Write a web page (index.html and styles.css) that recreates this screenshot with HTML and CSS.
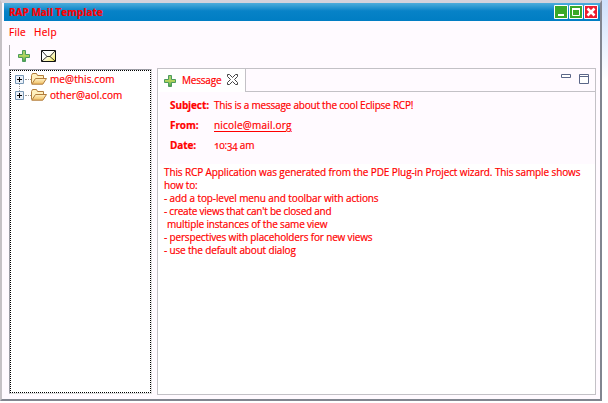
FILE: index.html
```html
<!DOCTYPE html>
<html lang="en">
<head>
<meta charset="utf-8">
<title>RAP Mail Template</title>
<link rel="stylesheet" href="styles.css">
</head>
<body>
<svg width="0" height="0" class="defs" aria-hidden="true">
  <defs>
    <linearGradient id="green" x2="0" y2="1"><stop stop-color="#9ccb6c"/><stop offset=".5" stop-color="#b5d65c"/><stop offset="1" stop-color="#3f9b50"/></linearGradient>
    <linearGradient id="gold" x2="0" y2="1"><stop stop-color="#fff4c8"/><stop offset="1" stop-color="#f0bd60"/></linearGradient>
    <linearGradient id="paper" x2="1" y2="1"><stop offset=".4" stop-color="#fff"/><stop offset="1" stop-color="#f4e84c"/></linearGradient>
    <symbol id="plus" viewBox="0 0 12 12"><path d="M4.5.5h3v4h4v3h-4v4h-3v-4h-4v-3h4z" fill="url(#green)" stroke="#4c9c5c"/></symbol>
    <symbol id="folder" viewBox="0 0 16 12"><path d="M.5 10.5v-8l1-2h4l1 2h6v3" fill="#fff0bd" stroke="#b17c3c"/><path d="M.8 11.2 4.5 5.5h11l-3.7 5.7z" fill="url(#gold)" stroke="#b17c3c"/></symbol>
    <symbol id="expand" viewBox="0 0 9 9"><path d="M.5.5h8v8h-8z" fill="#e9f0f8" stroke="#7898b5"/><path d="M2 4.5h5M4.5 2v5" stroke="#000"/></symbol>
  </defs>
</svg>
<div class="window">
  <header class="titlebar">
    <h1>RAP Mail Template</h1>
    <div class="controls">
      <svg class="control" viewBox="0 0 14 14"><path d="M.5.5h13v13H.5z" fill="#39a829" stroke="#fff"/><path d="M4 10h6" stroke="#fff" stroke-width="2"/></svg>
      <svg class="control" viewBox="0 0 14 14"><path d="M.5.5h13v13H.5z" fill="#39a829" stroke="#fff"/><path d="M3.5 4v6.5h7V4" fill="none" stroke="#fff"/><path d="M3 4h8" stroke="#fff" stroke-width="2"/></svg>
      <svg class="control" viewBox="0 0 14 14"><path d="M.5.5h13v13H.5z" fill="#ed1c2e" stroke="#fff"/><path d="m3.5 3.5 7 7m0-7-7 7" stroke="#fff" stroke-width="2.5"/></svg>
    </div>
  </header>
  <nav class="menu"><span>File</span><span>Help</span></nav>
  <div class="toolbar">
    <svg class="plus"><use href="#plus"/></svg>
    <svg class="mail" viewBox="0 0 15 12"><path d="M.5.5h14v11H.5z" fill="url(#paper)" stroke="#111"/><path d="m1 1 5 5.5h3L14 1M1 11l5-4.5M14 11 9 6.5" fill="none" stroke="#222" stroke-width=".9"/></svg>
  </div>
  <main class="workspace">
    <div class="tree">
      <div class="node"><svg class="expand"><use href="#expand"/></svg><i></i><svg class="folder"><use href="#folder"/></svg><span>me@this.com</span></div>
      <div class="link"></div>
      <div class="node"><svg class="expand"><use href="#expand"/></svg><i></i><svg class="folder"><use href="#folder"/></svg><span>other@aol.com</span></div>
    </div>
    <section class="view">
      <div class="tabs">
        <div class="tab"><svg class="plus"><use href="#plus"/></svg><span>Message</span>
          <svg class="close" viewBox="0 0 11 11"><path d="M.5.5h2l3 3 3-3h2v2l-3 3 3 3v2h-2l-3-3-3 3h-2v-2l3-3-3-3z" fill="#fff" stroke="#444"/></svg></div>
        <div class="rest">
          <svg class="min" viewBox="0 0 10 4"><path d="M.5.5h9v3h-9z" fill="#fff" stroke="#5b6688"/></svg>
          <svg class="max" viewBox="0 0 10 10"><path d="M.5.5h9v9h-9zM0 2.5h10" fill="#fff" stroke="#5b6688"/></svg>
        </div>
      </div>
      <div class="headers">
        <b>Subject:</b><span class="subject">This is a message about the cool Eclipse RCP!</span>
        <b>From:</b><span class="sender"><a>nicole@mail.org</a></span>
        <b>Date:</b><span class="date">10:34 am</span>
      </div>
      <div class="body">
        <div class="intro">This RCP Application was generated from the PDE Plug-in Project wizard. This sample shows</div>
        <div>how to:</div>
        <div class="intro">- add a top-level menu and toolbar with actions</div>
        <div class="tight">- create views that can't be closed and</div>
        <div class="indent">multiple instances of the same view</div>
        <div>- perspectives with placeholders for new views</div>
        <div>- use the default about dialog</div>
      </div>
    </section>
  </main>
</div>
</body>
</html>
```
FILE: styles.css
```css
* { box-sizing: border-box; }
body {
  margin: 0; width: 608px; height: 403px; overflow: hidden;
  background: linear-gradient(#cfe0fb, #fff 80px);
  font: 10px/13px "Open Sans", sans-serif; color: #f00; white-space: nowrap;
  -webkit-text-stroke: .2px #f00;
}
svg { display: block; flex: none; }
.defs { position: absolute; }
.window {
  display: flex; flex-direction: column;
  width: 602px; height: 401px; background: #fffaff;
  border: solid; border-width: 3px 2px 2px;
  border-color: #d5d3dc #81858f #81858f #c5c1c5;
  padding: 0 0 0 2px;
}
.titlebar {
  display: flex; justify-content: space-between; height: 18px;
  background: linear-gradient(#4eaddb, #0782c7 8px, #007dc3);
  padding: 2px 2px 0 5px;
}
h1 { margin: 0; font: bold 10px/15px "Open Sans", sans-serif; }
.controls { display: flex; gap: 1px; }
.control { width: 14px; height: 14px; }
.menu { display: flex; gap: 8px; height: 24px; padding: 5px 0 0 5px; letter-spacing: .3px; }
.toolbar {
  display: flex; align-items: center; gap: 11px;
  height: 21px; margin-left: 5px; padding-left: 8px; border-left: 1px solid #aaa6ac;
}
.plus { width: 12px; height: 12px; }
.mail { width: 15px; height: 12px; }
.workspace { display: flex; gap: 5px; flex: 1; padding: 2px 4px 4px 5px; min-height: 0; }
.tree {
  flex: none; width: 143px; margin: 1px 0; padding: 1px 5px; background: #fff;
  border: 1px solid #9b9ba3; border-right-color: #ddd; border-bottom-color: #ddd;
  outline: 1px dotted #000; outline-offset: -2px; letter-spacing: .1px;
}
.node { display: flex; align-items: center; height: 16px; }
.link { height: 7px; margin: -3px 0 -4px 4px; border-left: 1px dotted #999; }
.expand { width: 9px; height: 9px; }
.node i { width: 6px; border-top: 1px dotted #999; margin-left: 1px; }
.folder { width: 16px; height: 12px; margin-right: 3px; }
.view { flex: 1; min-width: 0; display: flex; flex-direction: column; background: #fff; border: 1px solid #c3c1c6; }
.tabs { display: flex; height: 23px; }
.tab { display: flex; align-items: center; width: 87px; padding-left: 6px; background: #fff; }
.tab span { width: 45px; margin-left: 6px; letter-spacing: -.2px; }
.close { width: 11px; height: 11px; margin-bottom: 2px; }
.rest {
  flex: 1; display: flex; justify-content: flex-end; align-items: flex-start; gap: 8px; padding: 5px 6px;
  background: #fffaff; border: solid #c3c1c6; border-width: 0 0 1px 1px;
}
.min { width: 10px; height: 4px; }
.max { width: 10px; height: 10px; }
.headers {
  display: grid; grid-template-columns: 44px 1fr; grid-auto-rows: 20px; align-items: center;
  height: 72px; padding: 3px 0 0 11px; margin-left: 1px; background: #fffaff;
}
.headers b { letter-spacing: -.1px; }
.subject { letter-spacing: -.21px; }
.sender { letter-spacing: .2px; }
.date { letter-spacing: -.2px; font-variant-numeric: oldstyle-nums; }
a { text-decoration: underline; text-underline-offset: 2px; }
.body { padding: 2px 0 0 6px; letter-spacing: -.16px; }
.intro { letter-spacing: -.11px; }
.tight { letter-spacing: -.24px; }
.indent { padding-left: 3px; }
```
